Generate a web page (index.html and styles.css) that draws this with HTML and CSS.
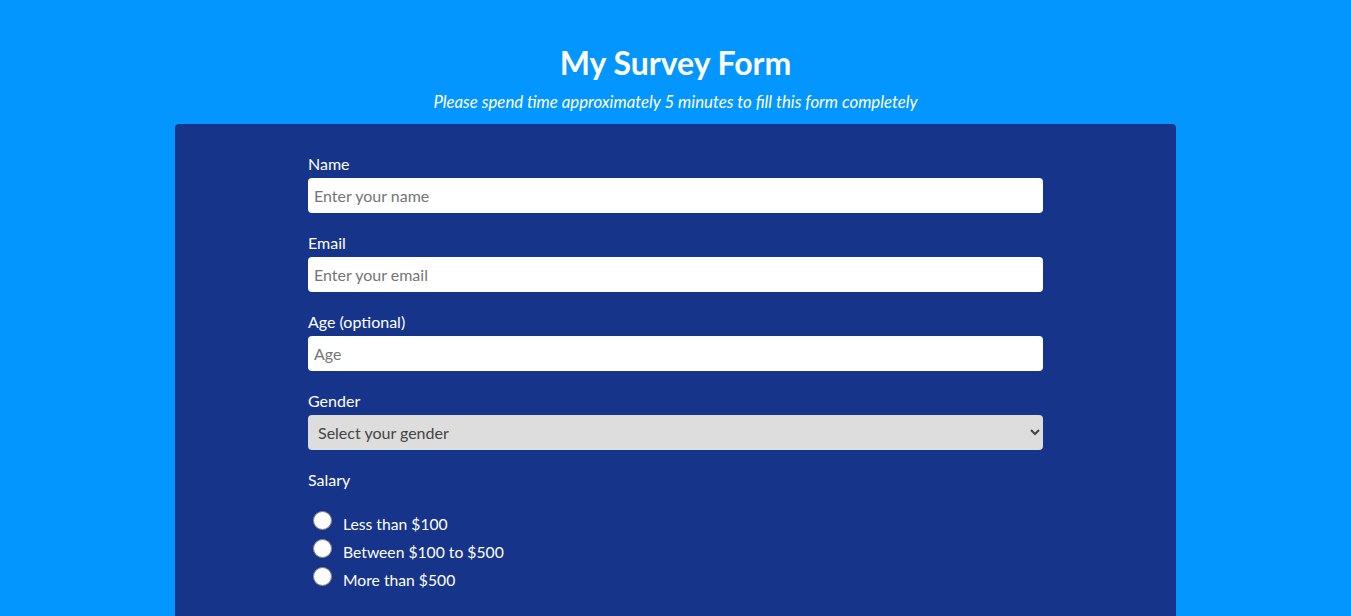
FILE: index.html
```html
<!DOCTYPE html>
<html lang="en">
<head>
<meta charset="utf-8">
<title>My Survey Form</title>
<link rel="stylesheet" href="styles.css">
</head>
<body>
<header class="header">
  <h1 class="title">My Survey Form</h1>
  <p class="subtitle">Please spend time approximately 5 minutes to fill this form completely</p>
</header>
<main class="card">
  <form class="form">
    <div class="group">
      <label class="label" for="name">Name</label>
      <input class="field" id="name" type="text" placeholder="Enter your name">
    </div>
    <div class="group">
      <label class="label" for="email">Email</label>
      <input class="field" id="email" type="email" placeholder="Enter your email">
    </div>
    <div class="group">
      <label class="label" for="age">Age (optional)</label>
      <input class="field" id="age" type="number" placeholder="Age">
    </div>
    <div class="group">
      <label class="label" for="gender">Gender</label>
      <select class="field select" id="gender">
        <option>Select your gender</option>
        <option>Male</option>
        <option>Female</option>
      </select>
    </div>
    <div class="group">
      <p class="label">Salary</p>
      <div class="radios">
        <label class="radio-row"><input class="radio" type="radio" name="salary"><span>Less than $100</span></label>
        <label class="radio-row"><input class="radio" type="radio" name="salary"><span>Between $100 to $500</span></label>
        <label class="radio-row"><input class="radio" type="radio" name="salary"><span>More than $500</span></label>
      </div>
    </div>
    <div class="group">
      <p class="label">What is your favourite item you used to buy here?</p>
    </div>
  </form>
</main>
</body>
</html>
```
FILE: styles.css
```css
html, body {
  margin: 0;
  padding: 0;
}
body {
  background: #0396ff;
  font-family: Lato, "Open Sans", sans-serif;
  color: #fff;
}
.header {
  text-align: center;
  padding-top: 41px;
}
.title {
  margin: 0 0 8px;
  font-size: 32px;
  line-height: 43px;
  font-weight: 700;
}
.subtitle {
  margin: 0 0 13px;
  font-size: 16.8px;
  line-height: 19px;
  font-style: italic;
}
.card {
  width: 1001px;
  box-sizing: border-box;
  margin: 0 auto;
  background: #16348a;
  border-radius: 4px;
  padding: 30px 133px 40px;
}
.form {
  display: flex;
  flex-direction: column;
}
.group {
  margin-bottom: 20px;
}
.label {
  display: block;
  margin: 0 0 5px;
  font-size: 16px;
  line-height: 19px;
}
.field {
  display: block;
  width: 100%;
  height: 35px;
  box-sizing: border-box;
  border: none;
  border-radius: 4px;
  padding: 0 6px;
  font-family: Lato, "Open Sans", sans-serif;
  font-size: 16px;
  background: #fff;
  color: #333;
}
.field::placeholder {
  color: #757575;
}
.select {
  background: #dddddd;
  color: #444;
}
.radios {
  margin-top: 21px;
  display: flex;
  flex-direction: column;
}
.radio-row {
  display: flex;
  align-items: flex-start;
  height: 28px;
  font-size: 15.7px;
  line-height: 19px;
}
.radio {
  width: 19px;
  height: 19px;
  margin: 1px 11px 0 5px;
}
.radio-row span {
  margin-top: 4.5px;
}
```
